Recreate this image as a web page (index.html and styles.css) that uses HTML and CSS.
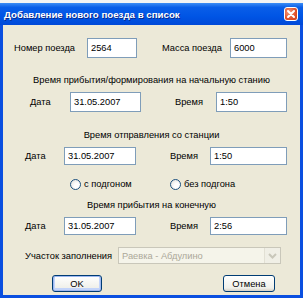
FILE: index.html
```html
<!DOCTYPE html>
<html lang="ru">
    <head>
        <meta charset="UTF-8">
        <title>Добавление нового поезда в список</title>
        <link rel="stylesheet" href="styles.css">
    </head>
    <body>
        <div class="strip"></div>
        <div class="window">
            <div class="titlebar">
                <span class="title">Добавление нового поезда в список</span>
                <span class="close">
                    <svg width="12" height="12" viewBox="0 0 12 12">
                        <path d="M3 3 L9 9 M9 3 L3 9" stroke="#fff" stroke-width="2" stroke-linecap="round"/>
                    </svg>
                </span>
            </div>

            <div class="content">
                <div class="row row1">
                    <span class="lbl l1">Номер поезда</span>
                    <input type="text" class="txt i1" value="2564">
                    <span class="lbl l2">Масса поезда</span>
                    <input type="text" class="txt i2" value="6000">
                </div>

                <div class="head h1">Время прибытия/формирования на начальную станию</div>
                <div class="row row2">
                    <span class="lbl dt">Дата</span>
                    <input type="text" class="txt date" value="31.05.2007">
                    <span class="lbl vr">Время</span>
                    <input type="text" class="txt time" value="1:50">
                </div>

                <div class="head h2">Время отправления со станции</div>
                <div class="row row3">
                    <span class="lbl dt">Дата</span>
                    <input type="text" class="txt date" value="31.05.2007">
                    <span class="lbl vr">Время</span>
                    <input type="text" class="txt time" value="1:50">
                </div>

                <div class="radios">
                    <label class="rd r1"><span class="dot"></span>с подгоном</label>
                    <label class="rd r2"><span class="dot"></span>без подгона</label>
                </div>

                <div class="head h3">Время прибытия на конечную</div>
                <div class="row row3">
                    <span class="lbl dt">Дата</span>
                    <input type="text" class="txt date" value="31.05.2007">
                    <span class="lbl vr">Время</span>
                    <input type="text" class="txt time" value="2:56">
                </div>

                <div class="row rowc">
                    <span class="lbl uc">Участок заполнения</span>
                    <div class="combo">
                        <span class="ctext">Раевка - Абдулино</span>
                        <span class="carrow">
                            <svg width="9" height="6" viewBox="0 0 9 6">
                                <path d="M1 1 L4.5 4.5 L8 1" stroke="#c9c7ba" stroke-width="2" fill="none"/>
                            </svg>
                        </span>
                    </div>
                </div>

                <div class="buttons">
                    <button type="button" class="bt ok">OK</button>
                    <button type="button" class="bt cancel">Отмена</button>
                </div>
            </div>
        </div>
    </body>
</html>
```

FILE: styles.css
```css
body {
    margin: 0;
    width: 303px;
    height: 298px;
    overflow: hidden;
    font-family: "Liberation Sans", Arial, sans-serif;
    font-size: 9.3px;
    color: #000;
    background: #fff;
}

.strip {
    height: 3px;
    background: #f4f4f4;
}

.window {
    height: 295px;
    box-sizing: border-box;
    border: 3px solid #0a4fe0;
    border-top: none;
    background: #ece9d8;
    display: flex;
    flex-direction: column;
}

.titlebar {
    height: 22px;
    margin: 0 -3px;
    background: linear-gradient(#3d8df5 0%, #0a5ee8 20%, #0055e5 60%, #0049d8 100%);
    display: flex;
    align-items: center;
    justify-content: space-between;
    padding: 0 5px 0 4px;
}

.title {
    color: #fff;
    font-weight: bold;
    font-size: 9.7px;
    text-shadow: 1px 1px #0a2a8a;
}

.close {
    width: 14px;
    height: 14px;
    box-sizing: border-box;
    border: 1px solid #fff;
    border-radius: 3px;
    background: radial-gradient(circle at 35% 35%, #f29a7c, #e0502a 60%, #c8401e);
    display: flex;
    align-items: center;
    justify-content: center;
}

.content {
    display: flex;
    flex-direction: column;
    padding-top: 13px;
}

.row {
    display: flex;
    align-items: center;
}

.lbl {
    white-space: nowrap;
    flex: none;
}

.txt {
    box-sizing: border-box;
    flex: none;
    height: 20px;
    border: 1px solid #7f9db9;
    background: #fff;
    font-family: inherit;
    font-size: 9.3px;
    padding: 0 0 0 3px;
    margin: 0;
    color: #000;
}

/* fixed label widths keep the inputs in their columns */
.row1 { padding-left: 11px; }
.row1 .l1 { width: 73px; }
.row1 .i1 { width: 50px; }
.row1 .l2 { margin-left: 25px; width: 68px; }
.row1 .i2 { width: 57px; }

.head {
    text-align: center;
    height: 14px;
    line-height: 14px;
}

.h1 { margin-top: 15px; }
.h2 { margin-top: 16px; }
.h3 { margin-top: 7px; }

.row2 { margin-top: 5px; padding-left: 27px; }
.row2 .dt { width: 40px; }
.row2 .date { width: 71px; }
.row2 .vr { margin-left: 34px; width: 41px; }
.row2 .time { width: 71px; }

.row3 { margin-top: 5px; padding-left: 22px; }
.row3 .txt { height: 18px; }
.row3 .dt { width: 39px; }
.row3 .date { width: 72px; }
.row3 .vr { margin-left: 34px; width: 40px; }
.row3 .time { width: 77px; }

.radios {
    margin-top: 12px;
    height: 14px;
    display: flex;
    align-items: center;
    padding-left: 67px;
}

.rd {
    display: flex;
    align-items: center;
    gap: 3px;
}

.r1 { width: 100px; }

.dot {
    width: 11px;
    height: 11px;
    box-sizing: border-box;
    border-radius: 50%;
    border: 1px solid #1c5180;
    background: radial-gradient(circle at 65% 65%, #fff 30%, #dcdcd6 100%);
}

.rowc {
    margin-top: 12px;
    padding-left: 22px;
}

.uc { width: 93px; }

.combo {
    width: 163px;
    height: 17px;
    box-sizing: border-box;
    border: 1px solid #c9c7ba;
    background: #f5f4ea;
    display: flex;
    align-items: center;
    justify-content: space-between;
}

.ctext {
    color: #aca899;
    padding-left: 3px;
}

.carrow {
    width: 15px;
    height: 15px;
    background: #f0efe6;
    border-left: 1px solid #e2e0d4;
    display: flex;
    align-items: center;
    justify-content: center;
}

.buttons {
    margin-top: 11px;
    display: flex;
}

.bt {
    box-sizing: border-box;
    height: 17px;
    border: 1px solid #003c74;
    border-radius: 3px;
    background: linear-gradient(#fff, #f0f0ea 80%, #d6d0c5);
    font-family: inherit;
    font-size: 9.3px;
    padding: 0;
    color: #000;
}

.ok {
    width: 50px;
    margin-left: 49px;
    box-shadow: inset 0 0 0 1px #9eb8f0, inset 0 -1px 0 2px #c3d4fa;
}

.cancel {
    width: 52px;
    margin-left: 121px;
}
```
